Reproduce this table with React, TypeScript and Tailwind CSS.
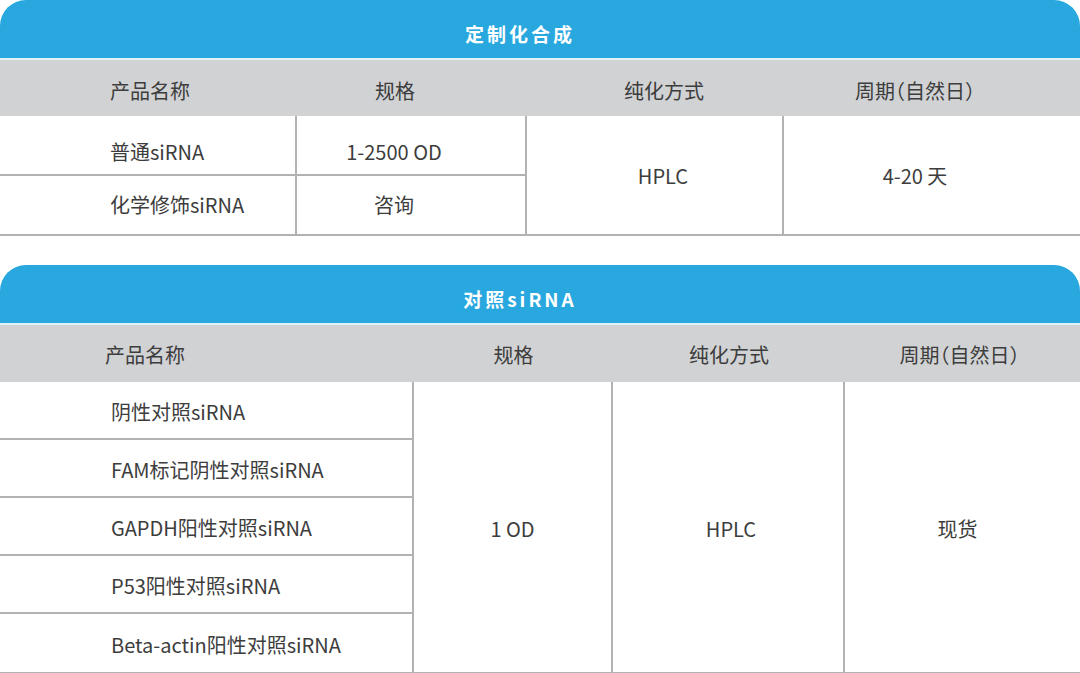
import React from 'react';

const font = { fontFamily: '"Noto Sans CJK SC", "Noto Sans", sans-serif' };

function TitleBar({ title }: { title: string }) {
    return (
        <div>
            <div className="flex h-[58px] items-center justify-center rounded-t-[26px] bg-[#29a7df] pr-[40px] pt-[10px]">
                <span className="text-[19px] font-bold tracking-[3px] text-white">{title}</span>
            </div>
            <div className="h-[2px] bg-[#dff3f9]" />
        </div>
    );
}

function Period() {
    return <span className="[font-feature-settings:'halt']">周期（自然日）</span>;
}

function CustomTable() {
    return (
        <div>
            <TitleBar title="定制化合成" />
            <div className="grid h-[56px] grid-cols-[297px_230px_257px_1fr] items-center bg-[#d1d2d4] pt-[5px] text-[20px] text-[#3d3d3d]">
                <div className="pl-[110px]">产品名称</div>
                <div className="pr-[34px] text-center">规格</div>
                <div className="pl-[17px] text-center">纯化方式</div>
                <div className="pr-[34px] text-center"><Period /></div>
            </div>
            <div className="grid grid-cols-[297px_230px_257px_1fr] grid-rows-[60px_58px] border-b-2 border-[#b2b2b2] text-[20px] text-[#3d3d3d]">
                <div className="flex items-center border-r-2 border-b-2 border-[#b2b2b2] pl-[110px] pt-[14px]">普通siRNA</div>
                <div className="flex items-center justify-center border-r-2 border-b-2 border-[#b2b2b2] pr-[34px] pt-[14px]">1-2500 OD</div>
                <div className="row-span-2 flex items-center justify-center border-r-2 border-[#b2b2b2] pl-[17px] pt-[2px]">HPLC</div>
                <div className="row-span-2 flex items-center justify-center pr-[34px] pt-[2px]">4-20 天</div>
                <div className="flex items-center border-r-2 border-[#b2b2b2] pl-[110px]">化学修饰siRNA</div>
                <div className="flex items-center justify-center border-r-2 border-[#b2b2b2] pr-[34px]">咨询</div>
            </div>
        </div>
    );
}

const controls = ['阴性对照siRNA', 'FAM标记阴性对照siRNA', 'GAPDH阳性对照siRNA', 'P53阳性对照siRNA', 'Beta-actin阳性对照siRNA'];

function ControlTable() {
    return (
        <div>
            <TitleBar title="对照siRNA" />
            <div className="grid h-[57px] grid-cols-[414px_199px_232px_1fr] items-center bg-[#d1d2d4] pt-[3px] text-[20px] text-[#3d3d3d]">
                <div className="pl-[105px]">产品名称</div>
                <div className="text-center">规格</div>
                <div className="text-center">纯化方式</div>
                <div className="pr-[6px] text-center"><Period /></div>
            </div>
            <div className="grid grid-cols-[414px_199px_232px_1fr] border-b-2 border-[#b2b2b2] text-[20px] text-[#3d3d3d]">
                <div className="border-r-2 border-[#b2b2b2]">
                    {controls.map((name, i) => (
                        <div
                            key={name}
                            className={`flex h-[58px] items-center pl-[111px] pt-[3px] ${i < controls.length - 1 ? 'border-b-2 border-[#b2b2b2]' : ''}`}
                        >
                            {name}
                        </div>
                    ))}
                </div>
                <div className="flex items-center justify-center border-r-2 border-[#b2b2b2] pt-[3px]">1 OD</div>
                <div className="flex items-center justify-center border-r-2 border-[#b2b2b2] pl-[6px] pt-[3px]">HPLC</div>
                <div className="flex items-center justify-center pr-[10px] pt-[3px]">现货</div>
            </div>
        </div>
    );
}

export default function App() {
    return (
        <div className="h-[673px] w-[1080px] overflow-hidden bg-white" style={font}>
            <CustomTable />
            <div className="mt-[29px]">
                <ControlTable />
            </div>
        </div>
    );
}
